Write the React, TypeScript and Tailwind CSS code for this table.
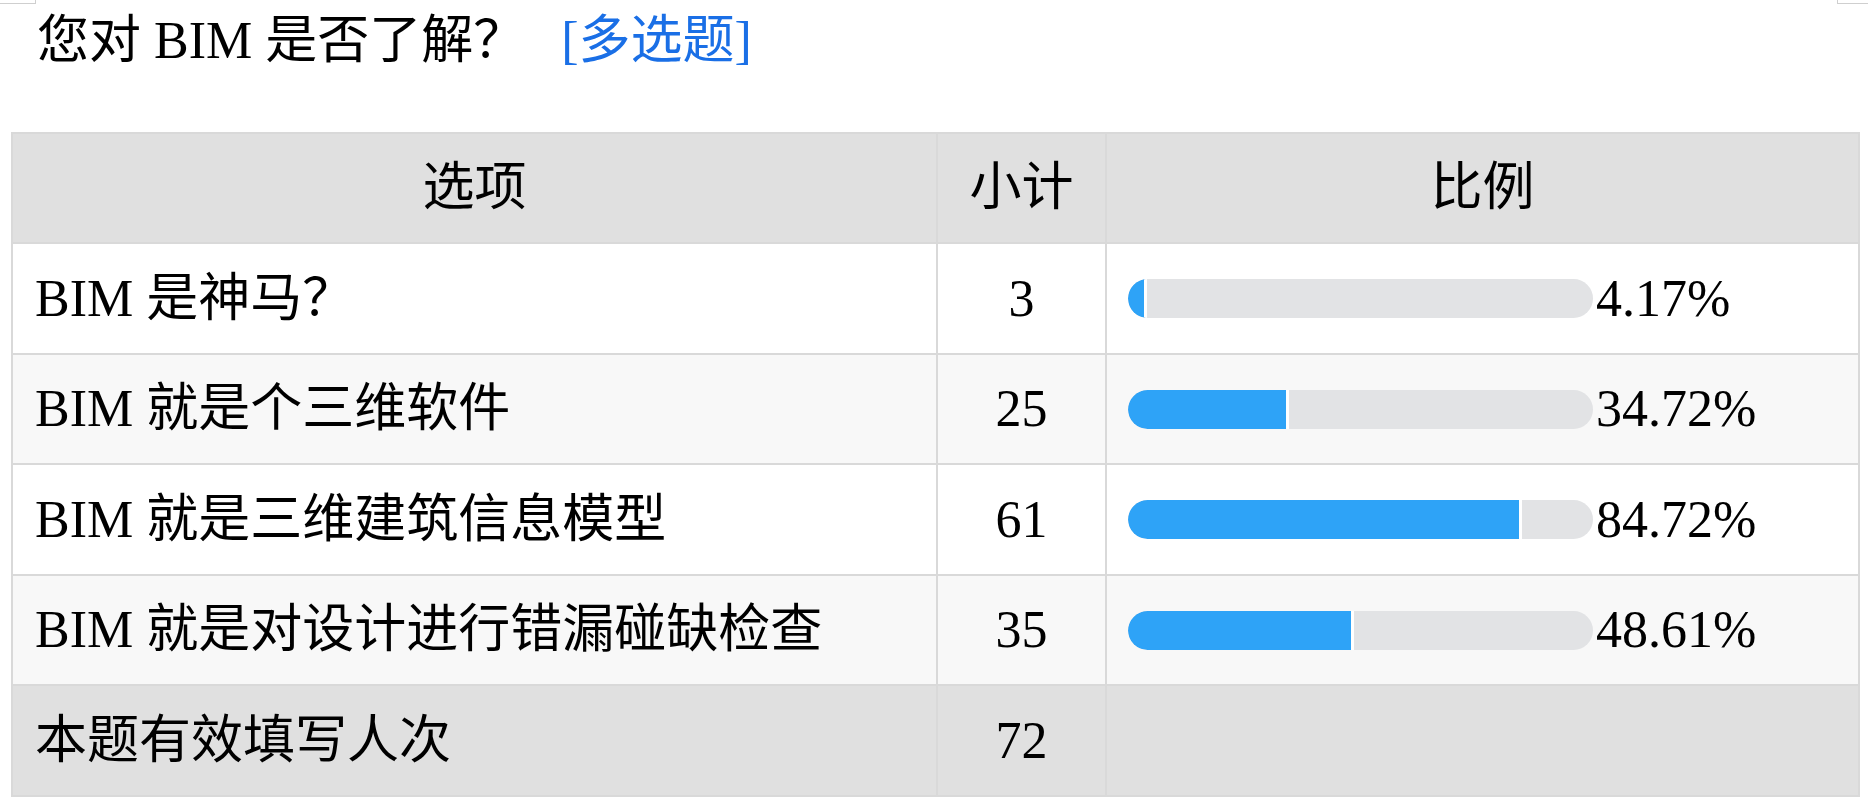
const rows = [
  { label: "BIM 是神马？", count: 3, pct: 4.17, h: "h-[111px]", bg: "bg-white" },
  { label: "BIM 就是个三维软件", count: 25, pct: 34.72, h: "h-[110px]", bg: "bg-[#f8f8f8]" },
  { label: "BIM 就是三维建筑信息模型", count: 61, pct: 84.72, h: "h-[111px]", bg: "bg-white" },
  { label: "BIM 就是对设计进行错漏碰缺检查", count: 35, pct: 48.61, h: "h-[110px]", bg: "bg-[#f8f8f8]" },
];

const cell = "flex items-center border-r-2 border-b-2 border-[#d9d9d9]";

export default function App() {
  return (
    <div className="min-h-[805px] w-full bg-white text-black font-['Liberation_Serif','Noto_Sans_CJK_SC',serif]">
      {/* cut-off frames at the top edge */}
      <div className="flex h-[4px] justify-between">
        <div className="w-[36px] border-r border-b border-[#cfcfcf]" />
        <div className="w-[31px] border-l border-b border-[#cfcfcf]" />
      </div>

      <div className="flex h-[74px] items-center pl-[37px] text-[52px] leading-none">
        <span>您对 BIM 是否了解？</span>
        <span className="ml-[36px] text-[#1a6fe6]">[多选题]</span>
      </div>

      <div className="mt-[54px] ml-[11px] w-[1849px] border-t-2 border-l-2 border-[#d9d9d9] text-[52px] leading-none">
        <div className="grid h-[110px] grid-cols-[925px_169px_753px] bg-[#e0e0e0]">
          <div className={`${cell} justify-center`}>选项</div>
          <div className={`${cell} justify-center`}>小计</div>
          <div className={`${cell} justify-center`}>比例</div>
        </div>

        {rows.map((r) => (
          <div key={r.label} className={`grid grid-cols-[925px_169px_753px] ${r.h} ${r.bg}`}>
            <div className={`${cell} pl-[22px]`}>{r.label}</div>
            <div className={`${cell} justify-center`}>{r.count}</div>
            <div className={`${cell} pl-[21px]`}>
              <div className="flex h-[39px] w-[465px] overflow-hidden rounded-full bg-[#e2e3e5]">
                <div
                  className="h-full rounded-l-full border-r-[3px] border-white bg-[#2ea3f7]"
                  style={{ width: `${r.pct}%` }}
                />
              </div>
              <span className="ml-[3px]">{r.pct.toFixed(2)}%</span>
            </div>
          </div>
        ))}

        <div className="grid h-[111px] grid-cols-[925px_169px_753px] bg-[#e0e0e0]">
          <div className={`${cell} pl-[22px]`}>本题有效填写人次</div>
          <div className={`${cell} justify-center`}>72</div>
          <div className={cell} />
        </div>
      </div>
    </div>
  );
}
